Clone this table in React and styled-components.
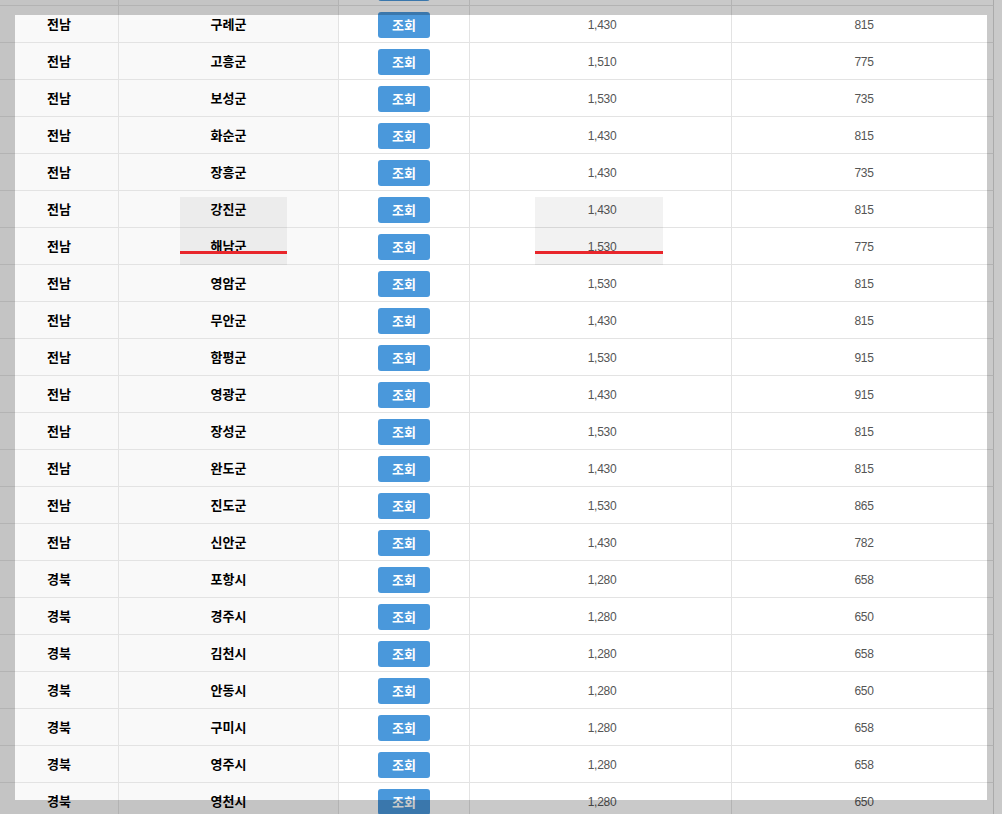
import React from "react";
import styled, { createGlobalStyle } from "styled-components";

const Global = createGlobalStyle`
  html, body { margin: 0; padding: 0; background: #fff; overflow: hidden; }
  body { font-family: "Noto Sans CJK KR", "Liberation Sans", sans-serif; }
`;

const Page = styled.div`
  width: 1002px;
  height: 814px;
  overflow: hidden;
  position: relative;
`;

const Scroller = styled.div`
  margin-top: -31px;
`;

const Table = styled.table`
  width: 994px;
  border-collapse: separate;
  border-spacing: 0;
  table-layout: fixed;
`;

const Row = styled.tr`
  height: 37px;
`;

const Cell = styled.td`
  box-sizing: border-box;
  height: 37px;
  padding: ${(p) => (p.$head ? "0 0 2px" : "2px 0 0 3px")};
  text-align: center;
  vertical-align: middle;
  border-bottom: 1px solid #e3e3e3;
  border-right: 1px solid #e3e3e3;
  background: ${(p) => (p.$head ? "#f9f9f9" : "#fff")};
  color: ${(p) => (p.$head ? "#000" : "#555")};
  font-family: ${(p) =>
    p.$head ? `"Noto Sans CJK KR", sans-serif` : `"Liberation Sans", "Noto Sans CJK KR", sans-serif`};
  font-weight: ${(p) => (p.$head ? 700 : 400)};
  font-size: ${(p) => (p.$head ? "13px" : "12px")};
  letter-spacing: ${(p) => (p.$head ? "0" : "-0.3px")};
  &:last-child { border-right: 1px solid #d8d8d8; }
`;

const ButtonCell = styled(Cell)`
  padding: 0;
`;

const Button = styled.button`
  width: 52px;
  height: 26px;
  margin-top: 1px;
  border: 0;
  border-radius: 3px;
  background: #4a98db;
  color: #fff;
  font-family: "Noto Sans CJK KR", sans-serif;
  font-weight: 700;
  font-size: 13px;
  padding: 0;
  display: inline-flex;
  align-items: center;
  justify-content: center;
  vertical-align: middle;
`;

const Dim = styled.div`
  position: absolute;
  left: 15px;
  top: 15px;
  width: 972px;
  height: 785px;
  box-shadow: 0 0 0 2000px rgba(0, 0, 0, 0.21);
  pointer-events: none;
`;

const Mark = styled.div`
  position: absolute;
  left: ${(p) => p.$x}px;
  top: 197px;
  width: ${(p) => p.$w}px;
  height: 68px;
  background: rgba(0, 0, 0, 0.05);
  pointer-events: none;
  &::after {
    content: "";
    position: absolute;
    left: 0;
    right: 0;
    top: 54px;
    height: 3px;
    background: #e8262b;
  }
`;

const rows = [
  ["전남", "곡성군", "1,430", "815"],
  ["전남", "구례군", "1,430", "815"],
  ["전남", "고흥군", "1,510", "775"],
  ["전남", "보성군", "1,530", "735"],
  ["전남", "화순군", "1,430", "815"],
  ["전남", "장흥군", "1,430", "735"],
  ["전남", "강진군", "1,430", "815"],
  ["전남", "해남군", "1,530", "775"],
  ["전남", "영암군", "1,530", "815"],
  ["전남", "무안군", "1,430", "815"],
  ["전남", "함평군", "1,530", "915"],
  ["전남", "영광군", "1,430", "915"],
  ["전남", "장성군", "1,530", "815"],
  ["전남", "완도군", "1,430", "815"],
  ["전남", "진도군", "1,530", "865"],
  ["전남", "신안군", "1,430", "782"],
  ["경북", "포항시", "1,280", "658"],
  ["경북", "경주시", "1,280", "650"],
  ["경북", "김천시", "1,280", "658"],
  ["경북", "안동시", "1,280", "650"],
  ["경북", "구미시", "1,280", "658"],
  ["경북", "영주시", "1,280", "658"],
  ["경북", "영천시", "1,280", "650"],
];

export default function App() {
  return (
    <>
      <Global />
      <Page>
        <Scroller>
          <Table>
            <colgroup>
              <col style={{ width: 119 }} />
              <col style={{ width: 220 }} />
              <col style={{ width: 131 }} />
              <col style={{ width: 262 }} />
              <col style={{ width: 262 }} />
            </colgroup>
            <tbody>
              {rows.map((r, i) => (
                <Row key={i}>
                  <Cell $head>{r[0]}</Cell>
                  <Cell $head>{r[1]}</Cell>
                  <ButtonCell>
                    <Button>조회</Button>
                  </ButtonCell>
                  <Cell>{r[2]}</Cell>
                  <Cell>{r[3]}</Cell>
                </Row>
              ))}
            </tbody>
          </Table>
        </Scroller>
        <Mark $x={180} $w={107} />
        <Mark $x={535} $w={128} />
        <Dim />
      </Page>
    </>
  );
}
